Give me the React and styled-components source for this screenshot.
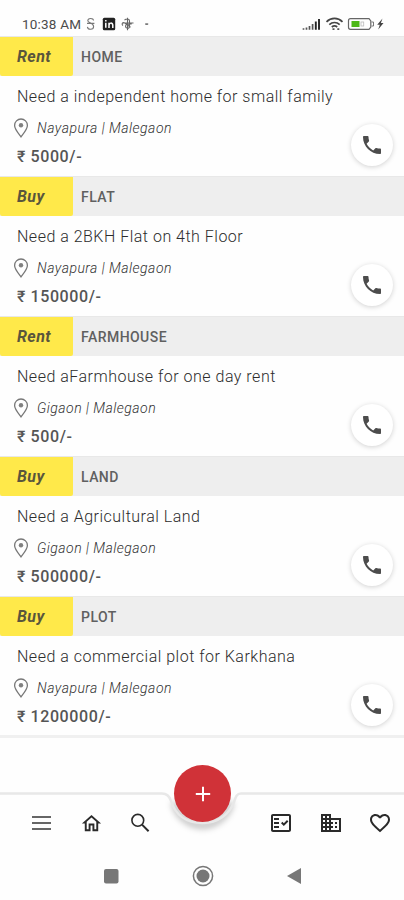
import React from 'react';
import styled, { createGlobalStyle } from 'styled-components';
import {
  MdPhone,
  MdOutlineHome,
  MdOutlineFactCheck,
  MdOutlineBusiness,
  MdFavoriteBorder,
} from 'react-icons/md';

const GlobalStyle = createGlobalStyle`
  * {
    box-sizing: border-box;
  }

  body {
    margin: 0;
    background: #fefefe;
    font-family: Roboto, 'Liberation Sans', sans-serif;
  }
`;

const Screen = styled.div`
  width: 404px;
  height: 900px;
  display: flex;
  flex-direction: column;
  overflow: hidden;
  background: #fefefe;
`;

const StatusBar = styled.div`
  height: 36px;
  padding: 12px 20px 0 22px;
  display: flex;
  justify-content: space-between;
  flex-shrink: 0;
`;

const StatusGroup = styled.div`
  height: 24px;
  display: flex;
  align-items: center;
`;

const Time = styled.span`
  width: 63px;
  font-size: 13.5px;
  letter-spacing: 0.2px;
  color: #4c4c4c;
  white-space: nowrap;
`;

const List = styled.div`
  height: 702px;
  flex-shrink: 0;
  border-bottom: 3px solid #f0f0f0;
`;

const Card = styled.div`
  height: 140px;
`;

const CardHeader = styled.div`
  height: 40px;
  display: flex;
  align-items: stretch;
  background: #eeeeee;
  border-top: 1px solid #e8e8e8;
`;

const Tag = styled.div`
  width: 73px;
  padding: 0 0 0 17px;
  display: flex;
  align-items: center;
  background: #ffe94a;
  border-radius: 0 0 2px 2px;
  color: #5a563c;
  font-size: 16px;
  font-weight: 700;
  font-style: italic;
  letter-spacing: 0.4px;
`;

const Category = styled.div`
  padding: 0 0 0 8px;
  display: flex;
  align-items: center;
  color: #606060;
  font-size: 14px;
  font-weight: 500;
  letter-spacing: 0.45px;
`;

const CardBody = styled.div`
  height: 100px;
  display: flex;
  justify-content: space-between;
  align-items: flex-start;
`;

const Details = styled.div`
  padding: 10px 0 0 17px;
`;

const Title = styled.div`
  height: 22px;
  line-height: 22px;
  font-size: 16px;
  font-weight: 300;
  letter-spacing: 0.5px;
  color: #2c2c2c;
  white-space: nowrap;
`;

const Location = styled.div`
  height: 24px;
  margin: 8px 0 0 -4px;
  display: flex;
  align-items: center;
  gap: 8px;
  font-size: 14px;
  font-weight: 300;
  font-style: italic;
  letter-spacing: 0.48px;
  color: #303030;
  white-space: nowrap;
`;

const Price = styled.div`
  height: 22px;
  margin-top: 6px;
  line-height: 22px;
  font-size: 16px;
  font-weight: 500;
  letter-spacing: 0.6px;
  color: #555;
`;

const CallButton = styled.button`
  width: 42px;
  height: 42px;
  margin: 48px 11px 0 0;
  padding: 0;
  display: flex;
  flex-shrink: 0;
  align-items: center;
  justify-content: center;
  border: none;
  border-radius: 50%;
  background: #fff;
  color: #4c4c4c;
  box-shadow: 0 1px 5px rgba(0, 0, 0, 0.18);
`;

const BottomArea = styled.div`
  position: relative;
  flex: 1;
  display: flex;
  flex-direction: column;
  padding-top: 57px;
`;

// the bar outline dips around the add button
const Notch = styled.svg`
  position: absolute;
  left: 0;
  top: 45px;
`;

const AddButton = styled.button`
  position: absolute;
  left: 174px;
  top: 27px;
  width: 57px;
  height: 57px;
  padding: 0;
  display: flex;
  align-items: center;
  justify-content: center;
  border: none;
  border-radius: 50%;
  background: #d03238;
`;

const NavBar = styled.div`
  height: 56px;
  padding: 0 12px 0 30px;
  display: flex;
  justify-content: space-between;
  align-items: center;
`;

const NavGroup = styled.div`
  width: ${(props) => props.$width}px;
  display: flex;
  justify-content: space-between;
  align-items: center;
  color: #2a2a2a;
`;

const SystemBar = styled.div`
  height: 50px;
  padding: 0 102px 0 103px;
  display: flex;
  align-items: center;
  justify-content: space-between;
`;

const ads = [
  { type: 'Rent', category: 'HOME', title: 'Need a independent home for small family', place: 'Nayapura | Malegaon', price: '5000' },
  { type: 'Buy', category: 'FLAT', title: 'Need a 2BKH Flat on 4th Floor', place: 'Nayapura | Malegaon', price: '150000' },
  { type: 'Rent', category: 'FARMHOUSE', title: 'Need aFarmhouse for one day rent', place: 'Gigaon | Malegaon', price: '500' },
  { type: 'Buy', category: 'LAND', title: 'Need a Agricultural Land', place: 'Gigaon | Malegaon', price: '500000' },
  { type: 'Buy', category: 'PLOT', title: 'Need a commercial plot for Karkhana', place: 'Nayapura | Malegaon', price: '1200000' },
];

const PinIcon = () => (
  <svg width="16" height="20" viewBox="0 0 16 20" fill="none">
    <path d="M8 18.8C5.5 15.4 1.6 11 1.6 7.4a6.4 6.4 0 0 1 12.8 0c0 3.6-3.9 8-6.4 11.4z" stroke="#777" strokeWidth="1.3" />
    <circle cx="8" cy="7.3" r="2.2" fill="#808080" />
  </svg>
);

const AppIcons = () => (
  <svg width="66" height="16" viewBox="0 0 66 16" fill="none">
    <path d="M8.6 4.5C8.2 1.8 2.8 1.7 2.8 4.8c0 2.2 5.8 2 5.8 5.7 0 3.7-5.8 3.6-6.2.4M2 7.4h7.4" stroke="#777" strokeWidth="1.1" />
    <rect x="17.8" y="1.8" width="12.4" height="12.4" rx="1.5" fill="#222" />
    <path d="M20.8 6.8v5M20.8 4v1.4M24 12V6.8M24 9.4c0-3 3.8-3 3.8-.2V12" stroke="#fff" strokeWidth="1.5" />
    <path d="M42.5 1.8v12.4M37 7h11.5M39.5 4.2c2-2 5-1.5 5 .8v5.6c0 2.5-4 2-4-.4 0-1.8 2-2.5 6.2-2.2M38 9.5c-2-1.5 0-3.8 2-2.4l5.5 4.2" stroke="#666" strokeWidth="1.1" />
    <rect x="60" y="7.3" width="3.4" height="1.6" rx="0.8" fill="#777" />
  </svg>
);

const SignalIcons = () => (
  <svg width="84" height="16" viewBox="0 0 84 16" fill="none">
    <path d="M3.5 13.8v-1.5M6.5 13.8v-2.3M9.5 13.8V10M12.6 13.8V8" stroke="#555" strokeWidth="1.7" />
    <path d="M15.8 13.8V5.5M19 13.8V3" stroke="#252525" strokeWidth="1.9" />
    <path d="M26.5 5.8c4.5-4.5 11.5-4.5 16 0M29.3 8.6c3-2.8 7.4-2.8 10.4 0M31.8 11c1.8-1.6 3.6-1.6 5.4 0" stroke="#454545" strokeWidth="1.7" />
    <path d="M32.5 13.2h2M37.3 13.2h2" stroke="#555" strokeWidth="1.8" />
    <path d="M50.5 2.7H69l1.8 2.2v6.2L69 13.3H50.5c-1.2 0-2-.8-2-2V4.7c0-1.2.8-2 2-2z" stroke="#666" strokeWidth="1.2" />
    <path d="M71.5 6h2v4h-2" stroke="#777" />
    <rect x="51.5" y="5" width="8" height="6" fill="#4db816" />
    <rect x="61" y="6" width="2.7" height="4" stroke="#bbb" strokeWidth="0.8" />
    <path d="M82.5 2.5l-5.3 6.2h2.6l-1.6 4.8 5.3-6.600h-2.600z" fill="#444" />
  </svg>
);

const MenuIcon = () => (
  <svg width="23" height="24" viewBox="0 0 23 24">
    <path d="M2 6h19M2 12h19M2 18h19" stroke="#666" strokeWidth="2" />
  </svg>
);

const SearchIcon = () => (
  <svg width="23" height="24" viewBox="0 0 23 24" fill="none" stroke="currentColor">
    <circle cx="8.8" cy="9.3" r="5.9" strokeWidth="1.6" />
    <path d="M13 13.6l6.6 6.6" strokeWidth="2" />
  </svg>
);

const App = () => {
  return (
    <>
      <GlobalStyle />
      <Screen>
        <StatusBar>
          <StatusGroup>
            <Time>10:38 AM</Time>
            <AppIcons />
          </StatusGroup>
          <StatusGroup>
            <SignalIcons />
          </StatusGroup>
        </StatusBar>

        <List>
          {ads.map((ad) => (
            <Card key={ad.category}>
              <CardHeader>
                <Tag>{ad.type}</Tag>
                <Category>{ad.category}</Category>
              </CardHeader>
              <CardBody>
                <Details>
                  <Title>{ad.title}</Title>
                  <Location>
                    <PinIcon />
                    {ad.place}
                  </Location>
                  <Price>₹ {ad.price}/-</Price>
                </Details>
                <CallButton aria-label="Call">
                  <MdPhone size={24} />
                </CallButton>
              </CardBody>
            </Card>
          ))}
        </List>

        <BottomArea>
          <Notch width="404" height="70" viewBox="0 0 404 70" fill="none">
            <defs>
              <filter id="soft" x="-20%" y="-20%" width="140%" height="160%">
                <feGaussianBlur stdDeviation="3" />
              </filter>
            </defs>
            <path d="M174 19a29 29 0 0 0 57 0" stroke="#000" strokeOpacity=".25" strokeWidth="6" filter="url(#soft)" />
            <path d="M0 10.5H162c5 0 7.5 2.5 9 7.5 4.5 14 15.5 22 31.5 22s27-9 31.5-21c2-6 3-8.5 7-8.5H404" stroke="#e8e8e8" strokeWidth="2.5" />
          </Notch>
          <AddButton aria-label="Add">
            <svg width="16" height="16" viewBox="0 0 16 16">
              <path d="M8 0.8v14.4M0.8 8h14.4" stroke="#fff" strokeWidth="2" />
            </svg>
          </AddButton>
          <NavBar>
            <NavGroup $width={122}>
              <MenuIcon />
              <MdOutlineHome size={23} />
              <SearchIcon />
            </NavGroup>
            <NavGroup $width={123}>
              <MdOutlineFactCheck size={24} />
              <MdOutlineBusiness size={24} />
              <MdFavoriteBorder size={24} />
            </NavGroup>
          </NavBar>
          <SystemBar>
            <svg width="16" height="16" viewBox="0 0 16 16">
              <rect x="1" y="1" width="14.5" height="14.5" rx="2" fill="#777" />
            </svg>
            <svg width="22" height="22" viewBox="0 0 22 22">
              <circle cx="11" cy="11" r="9.6" fill="none" stroke="#777" strokeWidth="1.5" />
              <circle cx="11" cy="11" r="6.5" fill="#777" />
            </svg>
            <svg width="16" height="18" viewBox="0 0 16 18">
              <path d="M1 9l14-8v16z" fill="#777" />
            </svg>
          </SystemBar>
        </BottomArea>
      </Screen>
    </>
  );
};

export default App;
